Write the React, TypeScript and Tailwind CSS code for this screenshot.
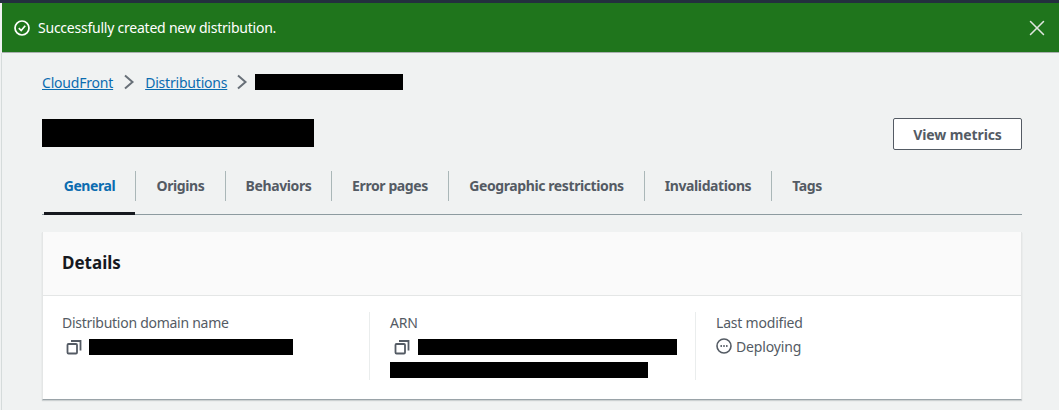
import { X } from "lucide-react";

const tabs = ["General", "Origins", "Behaviors", "Error pages", "Geographic restrictions", "Invalidations", "Tags"];
const tabWidths = ["w-[92px]", "w-[90px]", "w-[106px]", "w-[117px]", "w-[196px]", "w-[127px]", "w-[70px]"];

function Chevron() {
  return (
    <svg width="12" height="16" viewBox="0 0 12 16" fill="none" className="text-[#687078]">
      <path d="M2 1.5 L9.5 8 L2 14.5" stroke="currentColor" strokeWidth="2" />
    </svg>
  );
}

function CopyIcon() {
  return (
    <svg width="16" height="16" viewBox="0 0 16 16" fill="none" className="text-[#545b64]">
      <rect x="1.5" y="5" width="9.5" height="9.5" rx="1" stroke="currentColor" strokeWidth="1.8" />
      <path d="M5 2h9.5v9.5" stroke="currentColor" strokeWidth="1.8" />
    </svg>
  );
}

export default function App() {
  return (
    <div className="w-[1059px] h-[410px] overflow-hidden bg-[#f0f2f2] font-['Noto_Sans',sans-serif] text-[14px]">
      <div className="h-[3px] bg-[#232f3e]" />
      <div className="ml-[2px] h-[50px] flex items-center justify-between pl-[12px] pr-[9px] bg-[#1f751c] border-b border-[#aab0b0] text-white">
        <div className="flex items-center gap-[8px]">
          <svg width="16" height="16" viewBox="0 0 16 16" fill="none">
            <circle cx="8" cy="8" r="7" stroke="white" strokeWidth="1.7" />
            <path d="M4.8 8.2 L7.2 10.5 L11.2 5.8" stroke="white" strokeWidth="1.7" />
          </svg>
          <span className="tracking-[-0.23px]">Successfully created new distribution.</span>
        </div>
        <X size={26} strokeWidth={1.4} className="text-[#dfe6df]" />
      </div>

      <div className="h-[357px] ml-[1px] border-l border-[#d5dbdb] pl-[40px] pr-[37px] pt-[20px]">
        <div className="h-[18px] flex items-center">
          <a className="text-[#0b6cb0] underline tracking-[-0.2px]">CloudFront</a>
          <span className="ml-[10px] mr-[10px]"><Chevron /></span>
          <a className="text-[#0b6cb0] underline tracking-[-0.2px]">Distributions</a>
          <span className="ml-[9px] mr-[7px]"><Chevron /></span>
          <div className="w-[148px] h-[16px] bg-black" />
        </div>

        <div className="mt-[27px] flex items-center justify-between">
          <div className="w-[272px] h-[28px] mb-[2px] bg-black" />
          <button className="w-[129px] h-[32px] bg-white border border-[#545b64] rounded-[2px] font-bold text-[#545b64] tracking-[-0.1px]">
            View metrics
          </button>
        </div>

        <div className="mt-[21px] pl-[2px] flex h-[44px] border-b border-[#8d9ba0] relative">
          {tabs.map((t, i) => (
            <div key={t} className={`${tabWidths[i]} h-[30px] pb-[2px] flex items-center justify-center font-bold tracking-[-0.4px] ${i === 0 ? "text-[#0b6cb0]" : "text-[#545b64]"} ${i < tabs.length - 1 ? "border-r border-[#aab7b8]" : ""}`}>
              {t}
            </div>
          ))}
          <div className="absolute left-[2px] bottom-[-1px] w-[91px] h-[3px] bg-[#16191f]" />
        </div>

        <div className="mt-[17px] h-[168px] bg-white border-x border-[#e4e6e6] border-b border-b-[#9aa3a8] shadow-[0_1px_1px_rgba(0,22,30,0.15)]">
          <div className="h-[64px] pb-[2px] bg-[#fafafa] border-b border-[#e4e6e6] flex items-center pl-[19px]">
            <h2 className="text-[17px] font-bold text-[#16191f]">Details</h2>
          </div>
          <div className="flex pt-[16px] text-[#545b64]">
            <div className="w-[327px] h-[68px] pl-[19px] border-r border-[#eaeded]">
              <div className="leading-[22px] tracking-[-0.27px]">Distribution domain name</div>
              <div className="flex items-center h-[20px] mt-[3px] pl-[4px]">
                <CopyIcon />
                <div className="ml-[7px] w-[204px] h-[16px] bg-black" />
              </div>
            </div>
            <div className="w-[326px] h-[68px] pl-[20px] border-r border-[#eaeded]">
              <div className="leading-[22px] tracking-[-0.15px]">ARN</div>
              <div className="flex items-center h-[20px] mt-[3px] pl-[4px]">
                <CopyIcon />
                <div className="ml-[8px] w-[259px] h-[16px] bg-black" />
              </div>
              <div className="mt-[5px] w-[258px] h-[16px] bg-black" />
            </div>
            <div className="pl-[20px]">
              <div className="leading-[22px] tracking-[-0.2px]">Last modified</div>
              <div className="flex items-center gap-[4px] h-[20px] mt-[2px]">
                <svg width="16" height="16" viewBox="0 0 16 16" fill="none">
                  <circle cx="8" cy="8" r="7" stroke="currentColor" strokeWidth="1.6" />
                  <path d="M4.5 8h1.4M7.3 8h1.4M10.1 8h1.4" stroke="currentColor" strokeWidth="1.8" />
                </svg>
                <span className="tracking-[-0.15px]">Deploying</span>
              </div>
            </div>
          </div>
        </div>
      </div>
    </div>
  );
}
